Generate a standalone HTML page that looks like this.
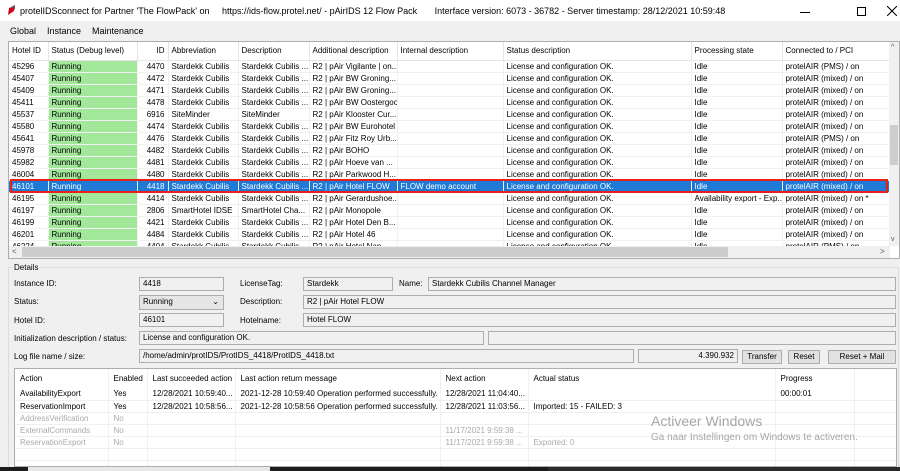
<!DOCTYPE html>
<html><head><meta charset="utf-8"><style>
*{margin:0;padding:0;box-sizing:border-box}
body{width:900px;height:471px;overflow:hidden;background:#f0f0f0;font-family:"Liberation Sans",sans-serif;font-size:8px;color:#000;position:relative}
.a{position:absolute;white-space:nowrap}
#title{left:0;top:0;width:900px;height:21px;background:#fff;font-size:9px}
table{border-collapse:collapse;table-layout:fixed}
#grid{position:absolute;left:9px;top:42px;width:880px;background:#fff}
#grid td{height:12px;line-height:11px;padding:0 3px;border-right:1px solid #f0f0f0;border-bottom:1px solid #f0f0f0;overflow:hidden;white-space:nowrap}
#grid tr.h td{height:18px;line-height:17px;border-right:1px solid #e5e5e5;border-bottom:1px solid #e5e5e5}
#grid td.g{background:#a3e79a}
#grid td.r{text-align:right}
#grid tr.s td{background:#1e7ad6;color:#fff}
.box{position:absolute;background:#f0f0f0;border:1px solid #adadad;height:14px;line-height:12px;padding:0 3px;white-space:nowrap;overflow:hidden}
.btn{position:absolute;background:#e1e1e1;border:1px solid #adadad;height:14px;line-height:12px;text-align:center}
#act{position:absolute;left:14px;top:368px;width:883px;height:99px;background:#fff;border:1px solid #adadad;overflow:hidden}
#act table{width:883px}
#act td{height:12px;line-height:11px;padding:0 5px;border-right:1px solid #f0f0f0;border-bottom:1px solid #f0f0f0;white-space:nowrap;overflow:hidden}
#act tr.h td{height:19px;line-height:18px;border-bottom:none}
#act tr.d td{color:#aaa}
</style></head><body>
<div id="title" class="a">
<svg class="a" style="left:6px;top:5px" width="10" height="11"><path d="M2 10 L3 3 L9 1 L8 6 Z" fill="#d0021b"/><path d="M5 2 L9 0 L9 4Z" fill="#555"/></svg>
<span class="a" style="left:20px;top:6px">protelIDSconnect for Partner 'The FlowPack' on&nbsp;&nbsp;&nbsp;&nbsp; https://ids-flow.protel.net/ - pAirIDS 12 Flow Pack&nbsp;&nbsp;&nbsp;&nbsp;&nbsp;&nbsp; Interface version: 6073 - 36782 - Server timestamp: 28/12/2021 10:59:48</span>
<span class="a" style="left:800px;top:12px;width:10px;height:1px;background:#000"></span>
<span class="a" style="left:857px;top:7px;width:9px;height:9px;border:1px solid #000"></span>
<svg class="a" style="left:887px;top:6px" width="10" height="10"><path d="M0 0L10 10M10 0L0 10" stroke="#000" stroke-width="1"/></svg>
</div>
<div class="a" style="left:10px;top:26px;font-size:9px">Global</div>
<div class="a" style="left:47px;top:26px;font-size:9px">Instance</div>
<div class="a" style="left:92px;top:26px;font-size:9px">Maintenance</div>
<div class="a" style="left:8px;top:41px;width:892px;height:218px;border:1px solid #adadad;background:#fff"></div>
<table id="grid">
<colgroup><col style="width:39px"><col style="width:89px"><col style="width:31px"><col style="width:70px"><col style="width:71px"><col style="width:88px"><col style="width:106px"><col style="width:188px"><col style="width:91px"><col style="width:107px"></colgroup>
<tr class="h"><td>Hotel ID</td><td>Status (Debug level)</td><td class="r">ID</td><td>Abbreviation</td><td>Description</td><td>Additional description</td><td>Internal description</td><td>Status description</td><td>Processing state</td><td>Connected to / PCI</td></tr>
<tr><td>45296</td><td class="g">Running</td><td class="r">4470</td><td>Stardekk Cubilis</td><td>Stardekk Cubilis ...</td><td>R2 | pAir Vigilante | on...</td><td></td><td>License and configuration OK.</td><td>Idle</td><td>protelAIR (PMS) / on</td></tr>
<tr><td>45407</td><td class="g">Running</td><td class="r">4472</td><td>Stardekk Cubilis</td><td>Stardekk Cubilis ...</td><td>R2 | pAir BW Groning...</td><td></td><td>License and configuration OK.</td><td>Idle</td><td>protelAIR (mixed) / on</td></tr>
<tr><td>45409</td><td class="g">Running</td><td class="r">4471</td><td>Stardekk Cubilis</td><td>Stardekk Cubilis ...</td><td>R2 | pAir BW Groning...</td><td></td><td>License and configuration OK.</td><td>Idle</td><td>protelAIR (mixed) / on</td></tr>
<tr><td>45411</td><td class="g">Running</td><td class="r">4478</td><td>Stardekk Cubilis</td><td>Stardekk Cubilis ...</td><td>R2 | pAir BW Oostergoo</td><td></td><td>License and configuration OK.</td><td>Idle</td><td>protelAIR (mixed) / on</td></tr>
<tr><td>45537</td><td class="g">Running</td><td class="r">6916</td><td>SiteMinder</td><td>SiteMinder</td><td>R2 | pAir Klooster Cur...</td><td></td><td>License and configuration OK.</td><td>Idle</td><td>protelAIR (mixed) / on</td></tr>
<tr><td>45580</td><td class="g">Running</td><td class="r">4474</td><td>Stardekk Cubilis</td><td>Stardekk Cubilis ...</td><td>R2 | pAir BW Eurohotel</td><td></td><td>License and configuration OK.</td><td>Idle</td><td>protelAIR (mixed) / on</td></tr>
<tr><td>45641</td><td class="g">Running</td><td class="r">4476</td><td>Stardekk Cubilis</td><td>Stardekk Cubilis ...</td><td>R2 | pAir Fitz Roy Urb...</td><td></td><td>License and configuration OK.</td><td>Idle</td><td>protelAIR (PMS) / on</td></tr>
<tr><td>45978</td><td class="g">Running</td><td class="r">4482</td><td>Stardekk Cubilis</td><td>Stardekk Cubilis ...</td><td>R2 | pAir BOHO</td><td></td><td>License and configuration OK.</td><td>Idle</td><td>protelAIR (mixed) / on</td></tr>
<tr><td>45982</td><td class="g">Running</td><td class="r">4481</td><td>Stardekk Cubilis</td><td>Stardekk Cubilis ...</td><td>R2 | pAir Hoeve van ...</td><td></td><td>License and configuration OK.</td><td>Idle</td><td>protelAIR (mixed) / on</td></tr>
<tr><td>46004</td><td class="g">Running</td><td class="r">4480</td><td>Stardekk Cubilis</td><td>Stardekk Cubilis ...</td><td>R2 | pAir Parkwood H...</td><td></td><td>License and configuration OK.</td><td>Idle</td><td>protelAIR (mixed) / on</td></tr>
<tr class="s"><td>46101</td><td>Running</td><td class="r">4418</td><td>Stardekk Cubilis</td><td>Stardekk Cubilis ...</td><td>R2 | pAir Hotel FLOW</td><td>FLOW demo account</td><td>License and configuration OK.</td><td>Idle</td><td>protelAIR (mixed) / on</td></tr>
<tr><td>46195</td><td class="g">Running</td><td class="r">4414</td><td>Stardekk Cubilis</td><td>Stardekk Cubilis ...</td><td>R2 | pAir Gerardushoe...</td><td></td><td>License and configuration OK.</td><td>Availability export - Exp...</td><td>protelAIR (mixed) / on *</td></tr>
<tr><td>46197</td><td class="g">Running</td><td class="r">2806</td><td>SmartHotel IDSE</td><td>SmartHotel Cha...</td><td>R2 | pAir Monopole</td><td></td><td>License and configuration OK.</td><td>Idle</td><td>protelAIR (mixed) / on</td></tr>
<tr><td>46199</td><td class="g">Running</td><td class="r">4421</td><td>Stardekk Cubilis</td><td>Stardekk Cubilis ...</td><td>R2 | pAir Hotel Den B...</td><td></td><td>License and configuration OK.</td><td>Idle</td><td>protelAIR (mixed) / on</td></tr>
<tr><td>46201</td><td class="g">Running</td><td class="r">4484</td><td>Stardekk Cubilis</td><td>Stardekk Cubilis ...</td><td>R2 | pAir Hotel 46</td><td></td><td>License and configuration OK.</td><td>Idle</td><td>protelAIR (mixed) / on</td></tr>
<tr><td>46224</td><td class="g">Running</td><td class="r">4404</td><td>Stardekk Cubilis</td><td>Stardekk Cubilis ...</td><td>R2 | pAir Hotel Nap...</td><td></td><td>License and configuration OK.</td><td>Idle</td><td>protelAIR (PMS) / on</td></tr>
</table>
<div class="a" style="left:10px;top:179px;width:878px;height:14px;border:2px solid #e8201a"></div>
<div class="a" style="left:9px;top:246px;width:881px;height:12px;background:#f0f0f0"></div>
<div class="a" style="left:22px;top:247px;width:706px;height:10px;background:#cdcdcd"></div>
<span class="a" style="left:12px;top:247px;font-size:8px;color:#555">&lt;</span>
<span class="a" style="left:880px;top:247px;font-size:8px;color:#555">&gt;</span>
<div class="a" style="left:889px;top:42px;width:10px;height:204px;background:#f0f0f0"></div>
<div class="a" style="left:890px;top:125px;width:8px;height:40px;background:#cdcdcd"></div>
<span class="a" style="left:891px;top:44px;font-size:7px;color:#555">^</span>
<span class="a" style="left:891px;top:236px;font-size:7px;color:#555">v</span>
<div class="a" style="left:8px;top:267px;width:891px;height:204px;border:1px solid #dcdcdc"></div>
<div class="a" style="left:13px;top:263px;background:#f0f0f0;padding:0 1px">Details</div>
<div class="a" style="left:14px;top:279px">Instance ID:</div>
<div class="a" style="left:14px;top:297px">Status:</div>
<div class="a" style="left:14px;top:316px">Hotel ID:</div>
<div class="a" style="left:14px;top:334px">Initialization description / status:</div>
<div class="a" style="left:14px;top:352px">Log file name / size:</div>
<div class="box" style="left:139px;top:277px;width:85px">4418</div>
<div class="box" style="left:139px;top:295px;width:85px;height:15px;background:#e5e5e5">Running<span class="a" style="right:4px;top:0">⌄</span></div>
<div class="box" style="left:139px;top:313px;width:85px">46101</div>
<div class="a" style="left:240px;top:279px">LicenseTag:</div>
<div class="a" style="left:240px;top:297px">Description:</div>
<div class="a" style="left:240px;top:316px">Hotelname:</div>
<div class="box" style="left:303px;top:277px;width:90px">Stardekk</div>
<div class="a" style="left:399px;top:279px">Name:</div>
<div class="box" style="left:428px;top:277px;width:468px">Stardekk Cubilis Channel Manager</div>
<div class="box" style="left:303px;top:295px;width:593px">R2 | pAir Hotel FLOW</div>
<div class="box" style="left:303px;top:313px;width:593px">Hotel FLOW</div>
<div class="box" style="left:139px;top:331px;width:345px">License and configuration OK.</div>
<div class="box" style="left:488px;top:331px;width:408px"></div>
<div class="box" style="left:139px;top:349px;width:495px">/home/admin/protIDS/ProtIDS_4418/ProtIDS_4418.txt</div>
<div class="box" style="left:638px;top:349px;width:100px;text-align:right">4.390.932</div>
<div class="btn" style="left:742px;top:350px;width:40px">Transfer</div>
<div class="btn" style="left:788px;top:350px;width:32px">Reset</div>
<div class="btn" style="left:828px;top:350px;width:68px">Reset + Mail</div>
<div id="act"><table>
<colgroup><col style="width:93px"><col style="width:39px"><col style="width:88px"><col style="width:205px"><col style="width:88px"><col style="width:247px"><col style="width:79px"><col></colgroup>
<tr class="h"><td>Action</td><td>Enabled</td><td>Last succeeded action</td><td>Last action return message</td><td>Next action</td><td>Actual status</td><td>Progress</td><td></td></tr>
<tr><td>AvailabilityExport</td><td>Yes</td><td>12/28/2021 10:59:40...</td><td>2021-12-28 10:59:40 Operation performed successfully.</td><td>12/28/2021 11:04:40...</td><td></td><td>00:00:01</td><td></td></tr>
<tr><td>ReservationImport</td><td>Yes</td><td>12/28/2021 10:58:56...</td><td>2021-12-28 10:58:56 Operation performed successfully.</td><td>12/28/2021 11:03:56...</td><td>Imported: 15 - FAILED: 3</td><td></td><td></td></tr>
<tr class="d"><td>AddressVerification</td><td>No</td><td></td><td></td><td></td><td></td><td></td><td></td></tr>
<tr class="d"><td>ExternalCommands</td><td>No</td><td></td><td></td><td>11/17/2021 9:59:38 ...</td><td></td><td></td><td></td></tr>
<tr class="d"><td>ReservationExport</td><td>No</td><td></td><td></td><td>11/17/2021 9:59:38 ...</td><td>Exported: 0</td><td></td><td></td></tr>
<tr><td>&nbsp;</td><td></td><td></td><td></td><td></td><td></td><td></td><td></td></tr>
<tr><td>&nbsp;</td><td></td><td></td><td></td><td></td><td></td><td></td><td></td></tr>
</table></div>
<div class="a" style="left:651px;top:413px;font-size:14px;color:#a6a6a6">Activeer Windows</div>
<div class="a" style="left:651px;top:432px;font-size:10px;color:#a6a6a6">Ga naar Instellingen om Windows te activeren.</div>
<div class="a" style="left:0;top:467px;width:900px;height:4px;background:#1c1c1c"></div>
<div class="a" style="left:28px;top:467px;width:242px;height:4px;background:#e8e8e8"></div>
<div class="a" style="left:548px;top:467px;width:352px;height:4px;background:#2a2a2a"></div>
</body></html>
